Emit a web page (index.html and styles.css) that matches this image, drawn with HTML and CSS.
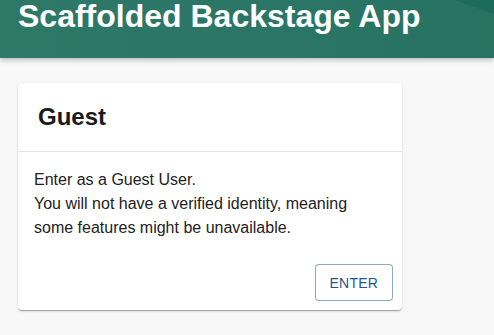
FILE: index.html
```html
<!DOCTYPE html>
<html lang="en">
<head>
<meta charset="UTF-8">
<title>Sign in</title>
<link rel="stylesheet" href="styles.css">
</head>
<body>

<!-- Page header -->
<header class="page-header">
  <svg class="header-wave" viewBox="0 0 494 58" preserveAspectRatio="none">
    <path d="M455 0 L494 0 L494 14 Z" fill="#1d6b5a"/>
  </svg>
  <h1 class="page-title">Scaffolded Backstage App</h1>
</header>

<!-- Sign in providers -->
<main class="content">
  <div class="provider-card">
    <div class="provider-card__header">
      <h2 class="provider-card__title">Guest</h2>
    </div>
    <div class="provider-card__body">
      <p>Enter as a Guest User.<br>
      You will not have a verified identity, meaning some features might be unavailable.</p>
    </div>
    <div class="provider-card__actions">
      <button class="btn-outlined">Enter</button>
    </div>
  </div>
</main>

</body>
</html>
```

FILE: styles.css
```css
body {
  margin: 0;
  background: #f8f8f8;
  font-family: 'Liberation Sans', Arial, sans-serif;
  color: #222;
  overflow: hidden;
}

/* Header */
.page-header {
  position: relative;
  height: 58px;
  background: linear-gradient(90deg, #2e7868 0%, #2a7565 60%, #287262 100%);
  box-shadow: 0 2px 5px rgba(0, 0, 0, 0.25);
  padding: 0 18px;
  overflow: hidden;
}

.header-wave {
  position: absolute;
  top: 0;
  left: 0;
  width: 100%;
  height: 100%;
}

.page-title {
  position: relative;
  margin: 0;
  margin-top: -4px;
  font-size: 32px;
  line-height: 40px;
  font-weight: 700;
  color: #fff;
}

/* Content */
.content {
  padding: 25px 18px;
}

.provider-card {
  width: 384px;
  background: #fff;
  border-radius: 4px;
  box-shadow: 0 2px 1px -1px rgba(0, 0, 0, 0.2), 0 1px 1px 0 rgba(0, 0, 0, 0.14), 0 1px 3px 0 rgba(0, 0, 0, 0.12);
}

.provider-card__header {
  padding: 16px 21px;
  height: 36px;
  border-bottom: 1px solid #e4e4e4;
  display: flex;
  align-items: center;
}

.provider-card__title {
  margin: 0;
  margin-left: -1px;
  font-size: 24px;
  font-weight: 700;
  color: #1a1a1a;
}

.provider-card__body {
  padding: 16px 16px 0;
}

.provider-card__body p {
  margin: 0;
  font-size: 16px;
  line-height: 24px;
  color: #222;
}

.provider-card__actions {
  display: flex;
  justify-content: flex-end;
  padding: 24px 9px 9px;
}

.btn-outlined {
  height: 37px;
  padding: 0 14px;
  background: #fff;
  border: 1px solid rgba(31, 84, 147, 0.5);
  border-radius: 4px;
  color: #1f5493;
  font-family: 'Liberation Sans', Arial, sans-serif;
  font-size: 14px;
  letter-spacing: 0.2px;
  text-transform: uppercase;
  cursor: pointer;
}
```
